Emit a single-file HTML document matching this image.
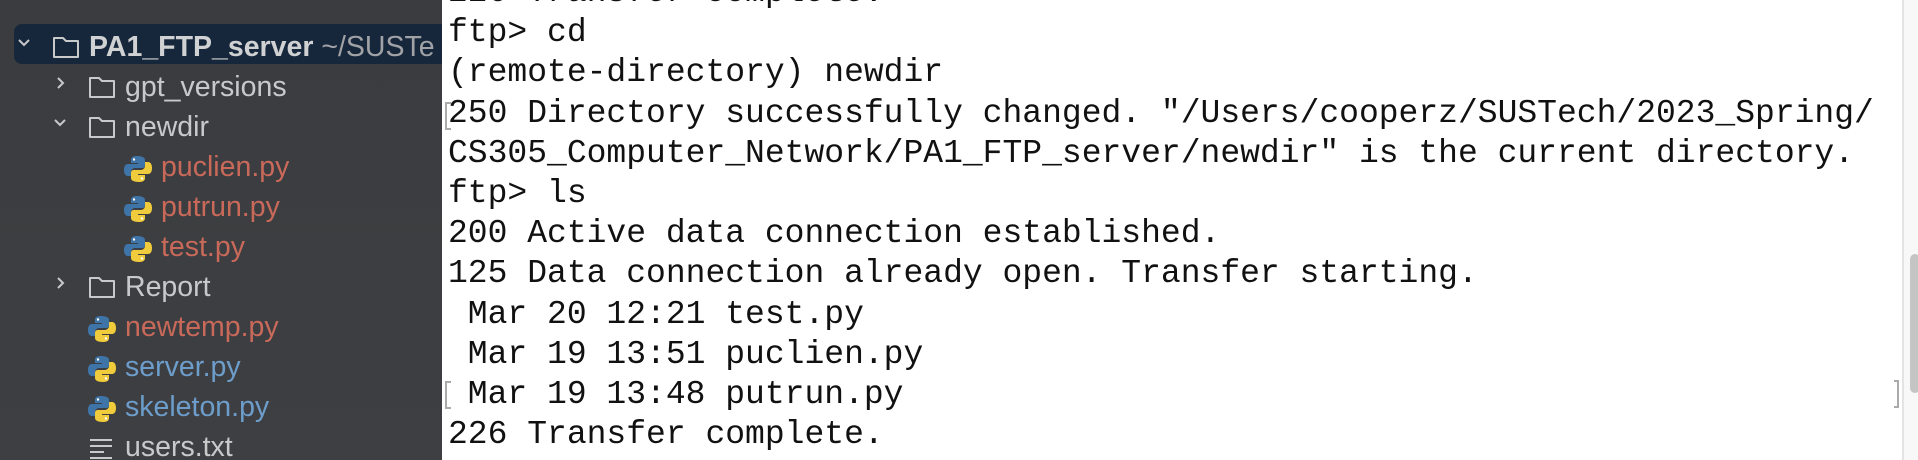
<!DOCTYPE html>
<html><head><meta charset="utf-8"><style>
body{margin:0;width:1918px;height:460px;overflow:hidden;background:#fff;position:relative;font-family:"Liberation Sans",sans-serif}
#side{position:absolute;left:0;top:0;width:442px;height:460px;background:linear-gradient(#3a3c3f,#3d3f42);overflow:hidden}
#hl{position:absolute;left:14px;top:24px;width:428px;height:40px;background:#16263b;border-radius:8px 0 0 8px}
.row{position:absolute;height:40px;line-height:40px;font-size:28.5px;color:#c8c9cb;white-space:nowrap}
.row svg{position:absolute;top:8px}
.r{color:#c8695a}.b{color:#6d9dca}
.ch{position:absolute}
#term{position:absolute;left:448px;top:-27px;font-family:"Liberation Mono",monospace;font-size:33px;line-height:40.2px;color:#111;white-space:pre}
.br{position:absolute;width:4px;height:24px;border:2px solid #aaa;border-right:none}
</style></head><body>
<div id="side">
<div id="hl"></div>
<svg width="0" height="0" style="position:absolute"><defs>
<symbol id="py" viewBox="0 0 28 28"><path d="M13 1c-6 0-6 3-6 4v3h7v1H4C1 9 0 12 0 15s1 6 4 6h3v-4c0-2 2-4 4-4h7c2 0 3-1 3-3V5c0-2-2-4-8-4z" fill="#3f74a8"/><path d="M15 27c6 0 6-3 6-4v-3h-7v-1h10c3 0 4-3 4-6s-1-6-4-6h-3v4c0 2-2 4-4 4h-7c-2 0-3 1-3 3v5c0 2 2 4 8 4z" fill="#f0cb3c"/><circle cx="10" cy="4.5" r="1.2" fill="#fff"/><circle cx="18" cy="23.5" r="1.2" fill="#fff"/></symbol>
<symbol id="fd" viewBox="0 0 28 24"><path d="M2 3h9l3 3h12v16H2z" fill="none" stroke="#c8c9cb" stroke-width="2" stroke-linejoin="round"/></symbol>
<symbol id="cd" viewBox="0 0 14 10"><path d="M2 2l5 5 5-5" fill="none" stroke="#c8c9cb" stroke-width="2"/></symbol>
<symbol id="cr" viewBox="0 0 10 14"><path d="M2 2l5 5-5 5" fill="none" stroke="#c8c9cb" stroke-width="2"/></symbol>
</defs></svg>
<svg class="ch" style="left:17px;top:38px" width="14" height="10"><use href="#cd"/></svg>
<div class="row" style="top:27px;left:52px"><svg width="28" height="24"><use href="#fd"/></svg><span style="margin-left:37px"><b style="color:#d0d1d3">PA1_FTP_server</b> <span style="color:#a0a2a6">~/SUSTe</span></span></div>
<svg class="ch" style="left:56px;top:76px" width="10" height="14"><use href="#cr"/></svg>
<div class="row" style="top:67px;left:88px"><svg width="28" height="24"><use href="#fd"/></svg><span style="margin-left:37px">gpt_versions</span></div>
<svg class="ch" style="left:53px;top:118px" width="14" height="10"><use href="#cd"/></svg>
<div class="row" style="top:107px;left:88px"><svg width="28" height="24"><use href="#fd"/></svg><span style="margin-left:37px">newdir</span></div>
<div class="row r" style="top:147px;left:124px"><svg width="28" height="28"><use href="#py"/></svg><span style="margin-left:37px">puclien.py</span></div>
<div class="row r" style="top:187px;left:124px"><svg width="28" height="28"><use href="#py"/></svg><span style="margin-left:37px">putrun.py</span></div>
<div class="row r" style="top:227px;left:124px"><svg width="28" height="28"><use href="#py"/></svg><span style="margin-left:37px">test.py</span></div>
<svg class="ch" style="left:56px;top:276px" width="10" height="14"><use href="#cr"/></svg>
<div class="row" style="top:267px;left:88px"><svg width="28" height="24"><use href="#fd"/></svg><span style="margin-left:37px">Report</span></div>
<div class="row r" style="top:307px;left:88px"><svg width="28" height="28"><use href="#py"/></svg><span style="margin-left:37px">newtemp.py</span></div>
<div class="row b" style="top:347px;left:88px"><svg width="28" height="28"><use href="#py"/></svg><span style="margin-left:37px">server.py</span></div>
<div class="row b" style="top:387px;left:88px"><svg width="28" height="28"><use href="#py"/></svg><span style="margin-left:37px">skeleton.py</span></div>
<div class="row" style="top:427px;left:88px"><svg width="26" height="24" style="top:10px"><path d="M2 3h22M2 9h22M2 15h14M2 21h22" stroke="#c8c9cb" stroke-width="2"/></svg><span style="margin-left:37px">users.txt</span></div>
</div>
<div id="term">226 Transfer complete.
ftp> cd
(remote-directory) newdir
250 Directory successfully changed. "/Users/cooperz/SUSTech/2023_Spring/
CS305_Computer_Network/PA1_FTP_server/newdir" is the current directory.
ftp> ls
200 Active data connection established.
125 Data connection already open. Transfer starting.
 Mar 20 12:21 test.py
 Mar 19 13:51 puclien.py
 Mar 19 13:48 putrun.py
226 Transfer complete.</div>
<div class="br" style="left:445px;top:102px"></div>
<div class="br" style="left:445px;top:381px"></div>
<div style="position:absolute;left:1894px;top:380px;width:3px;height:24px;border:2px solid #aaa;border-left:none"></div>
<div style="position:absolute;left:1902px;top:0;width:16px;height:460px;background:#f8f8f8;border-left:2px solid #e4e4e4"></div>
<div style="position:absolute;left:1910px;top:254px;width:10px;height:139px;background:#c5c5c5;border-radius:5px"></div>
</body></html>
